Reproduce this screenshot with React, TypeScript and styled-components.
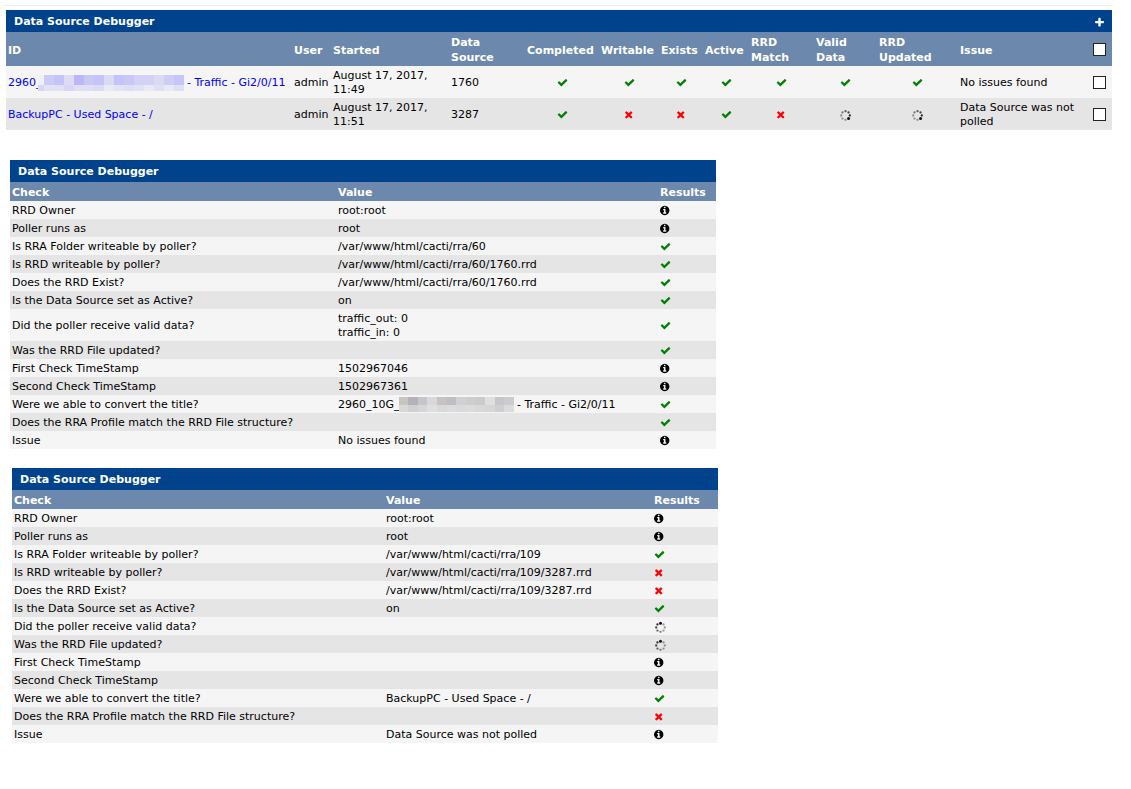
import React from "react";
import styled, { createGlobalStyle } from "styled-components";

const GlobalStyle = createGlobalStyle`
  body {
    margin: 0;
    background: #ffffff;
    color: #000000;
    font-family: Verdana, "DejaVu Sans", sans-serif;
    font-size: 11px;
    line-height: 14px;
  }
`;

const Page = styled.main`
  padding: 5px 18px 46px 4px;
`;

const Rule = styled.hr`
  height: 1px;
  margin: 0 0 4px;
  border: 0;
  background: #eeeeee;
`;

const Panel = styled.section<{ $indent: number; $space: number; $max?: number }>`
  max-width: ${(p) => (p.$max ? `${p.$max}px` : "none")};
  margin: 0 1px ${(p) => p.$space}px ${(p) => p.$indent}px;
`;

const TitleBar = styled.header`
  display: flex;
  align-items: center;
  justify-content: space-between;
  box-sizing: border-box;
  height: 22px;
  padding: 2px 7px 0 8px;
  background: #00438c;
  color: #ffffff;
`;

const Title = styled.h2`
  margin: 0;
  font-size: 11px;
  line-height: 14px;
`;

const AddButton = styled.button`
  display: flex;
  padding: 0;
  border: 0;
  background: none;
  color: #ffffff;
  cursor: pointer;
`;

const Table = styled.table`
  width: 100%;
  table-layout: fixed;
  border-collapse: collapse;
`;

const HeadRow = styled.tr`
  background: #6d88ad;
  color: #ffffff;
  line-height: 15px;
`;

const Row = styled.tr`
  background: #e5e5e5;

  &:nth-child(odd) {
    background: #f5f5f5;
  }
`;

const Col = styled.col<{ $w?: number }>`
  width: ${(p) => (p.$w ? `${p.$w}px` : "auto")};
`;

const HeadCell = styled.th`
  padding: 3px 2px 1px;
  text-align: left;
  font-weight: bold;
  white-space: pre-line;
`;

const Cell = styled.td<{ $center?: boolean }>`
  padding: 3px 2px 1px;
  text-align: ${(p) => (p.$center ? "center" : "left")};
  white-space: pre-line;
`;

const TickHeadCell = styled(HeadCell)`
  padding: 2px;
`;

const TickCell = styled(Cell)`
  padding: 2px;
`;

const TitleLink = styled.a`
  color: #0000ff;
  text-decoration: none;
  white-space: nowrap;
`;

const Tick = styled.input`
  appearance: none;
  display: block;
  box-sizing: border-box;
  width: 13px;
  height: 13px;
  margin: 0 0 0 4px;
  border: 1px solid #222222;
  background: #ffffff;
`;

const Glyph = styled.svg<{ $color: string }>`
  display: inline-block;
  width: 11px;
  height: 11px;
  vertical-align: -2px;
  fill: ${(p) => p.$color};
`;

const SpinnerGlyph = styled(Glyph)`
  width: 13px;
  height: 13px;
  margin-bottom: -1px;
  vertical-align: -3px;
`;

const Mosaic = styled.svg<{ $overlap: number; $drop: number }>`
  display: inline-block;
  margin: -4px 0 -4px -${(p) => p.$overlap}px;
  vertical-align: -${(p) => p.$drop}px;
`;

const paths = {
  check:
    "M1671 566q0 40-28 68l-724 724-136 136q-28 28-68 28t-68-28l-136-136-362-362q-28-28-28-68t28-68l136-136q28-28 68-28t68 28l294 295 656-657q28-28 68-28t68 28l136 136q28 28 28 68z",
  times:
    "M1490 1322q0 40-28 68l-136 136q-28 28-68 28t-68-28l-294-294-294 294q-28 28-68 28t-68-28l-136-136q-28-28-28-68t28-68l294-294-294-294q-28-28-28-68t28-68l136-136q28-28 68-28t68 28l294 294 294-294q28-28 68-28t68 28l136 136q28 28 28 68t-28 68l-294 294 294 294q28 28 28 68z",
  info:
    "M1152 1376v-160q0-14-9-23t-23-9h-96v-512q0-14-9-23t-23-9h-320q-14 0-23 9t-9 23v160q0 14 9 23t23 9h96v320h-96q-14 0-23 9t-9 23v160q0 14 9 23t23 9h448q14 0 23-9t9-23zm-128-896v-160q0-14-9-23t-23-9h-192q-14 0-23 9t-9 23v160q0 14 9 23t23 9h192q14 0 23-9t9-23zm640 416q0 209-103 385.5t-279.5 279.5-385.5 103-385.5-103-279.5-279.5-103-385.5 103-385.5 279.5-279.5 385.5-103 385.5 103 279.5 279.5 103 385.5z",
  plus:
    "M1600 736v192q0 40-28 68t-68 28h-416v416q0 40-28 68t-68 28h-192q-40 0-68-28t-28-68v-416h-416q-40 0-68-28t-28-68v-192q0-40 28-68t68-28h416v-416q0-40 28-68t68-28h192q40 0 68 28t28 68v416h416q40 0 68 28t28 68z",
};

type Status = "check" | "times" | "info" | "wait";

const names: Record<Status, string> = {
  check: "Passed",
  times: "Failed",
  info: "Information",
  wait: "Waiting",
};

/* The darkest dot of the spinner is at `lead`, counted clockwise from the top. */
function Spinner({ lead }: { lead: number }) {
  return (
    <SpinnerGlyph $color="#111111" viewBox="0 0 13 13" role="img" aria-label={names.wait}>
      {Array.from({ length: 8 }, (_, i) => {
        const angle = (i * Math.PI) / 4;
        const age = (lead - i + 8) % 8;
        return (
          <circle
            key={i}
            cx={6.5 + 4.3 * Math.sin(angle)}
            cy={6.5 - 4.3 * Math.cos(angle)}
            r={age === 0 ? 1.5 : 1.15}
            opacity={Math.max(0.4, 1 - age * 0.12)}
          />
        );
      })}
    </SpinnerGlyph>
  );
}

function StatusIcon({ status, lead = 0 }: { status: Status; lead?: number }) {
  if (status === "wait") return <Spinner lead={lead} />;
  const color = status === "check" ? "#008000" : status === "times" ? "#ff0000" : "#000000";
  return (
    <Glyph
      $color={color}
      viewBox={status === "check" ? "0 0 1792 1792" : "128 0 1792 1792"}
      role="img"
      aria-label={names[status]}
    >
      <path d={paths[status]} />
    </Glyph>
  );
}

/* Pixelated block that hides part of a device name; its first cell may be narrower than the rest. */
function Redacted({
  top,
  bottom,
  width,
  height,
  first,
  split,
  overlap,
  drop,
}: {
  top: string[];
  bottom: string[];
  width: number;
  height: number;
  first: number;
  split: number;
  overlap: number;
  drop: number;
}) {
  const step = (width - first) / (top.length - 1);
  const left = (i: number) => (i === 0 ? 0 : first + (i - 1) * step);
  return (
    <Mosaic
      $overlap={overlap}
      $drop={drop}
      width={width}
      height={height}
      shapeRendering="crispEdges"
      aria-hidden="true"
    >
      {top.map((fill, i) => (
        <rect key={`t${i}`} x={left(i)} y={0} width={step + 1} height={split} fill={fill} />
      ))}
      {bottom.map((fill, i) => (
        <rect key={`b${i}`} x={left(i)} y={split} width={step + 1} height={height - split} fill={fill} />
      ))}
    </Mosaic>
  );
}

const blueMosaic = (
  <Redacted
    width={146}
    height={16}
    first={6}
    split={10}
    overlap={4}
    drop={1}
    top={["#f0f0f6", "#cccbf5", "#c5c4f8", "#dedcf5", "#bab8f7", "#c8c7f6", "#c5c4f7", "#dad9f6", "#c4c3f7", "#c8c8f8", "#d3d2f6", "#d2d1f6", "#dad9f6", "#cecdf5", "#c6c5f8"]}
    bottom={["#d7d6f6", "#e3e2f5", "#e1e0f5", "#d7d6f6", "#e0dff5", "#dfdef6", "#dcdbf6", "#e9e8f6", "#e3e2f6", "#dedef6", "#e2e1f6", "#ebe8f6", "#dfdff6", "#eae9f6", "#dedef5"]}
  />
);

const greyMosaic = (
  <Redacted
    width={115}
    height={15}
    first={9}
    split={8}
    overlap={1}
    drop={0}
    top={["#c5c6c0", "#b4b2b7", "#c4c6cb", "#d8d8d9", "#c7c2c4", "#c1bec3", "#d0d1d2", "#cfcdcd", "#cfcaca", "#dce0e1", "#c6c7ca", "#cecbce"]}
    bottom={["#d8d8d8", "#d0d0d0", "#d6d6d6", "#dedede", "#d9d9d9", "#dcdcdc", "#dadada", "#dcdcdc", "#d8d8d8", "#d6d6d6", "#cfcfcf", "#dbdbdb"]}
  />
);

const summaryCols: { label: string; width?: number }[] = [
  { label: "ID" },
  { label: "User", width: 39 },
  { label: "Started", width: 118 },
  { label: "Data\nSource", width: 76 },
  { label: "Completed", width: 74 },
  { label: "Writable", width: 60 },
  { label: "Exists", width: 44 },
  { label: "Active", width: 46 },
  { label: "RRD\nMatch", width: 65 },
  { label: "Valid\nData", width: 63 },
  { label: "RRD\nUpdated", width: 81 },
  { label: "Issue", width: 129 },
];

const summaryRows: {
  title: React.ReactNode;
  started: string;
  source: string;
  statuses: Status[];
  issue: string;
}[] = [
  {
    title: <>2960_{blueMosaic} - Traffic - Gi2/0/11</>,
    started: "August 17, 2017,\n11:49",
    source: "1760",
    statuses: ["check", "check", "check", "check", "check", "check", "check"],
    issue: "No issues found",
  },
  {
    title: "BackupPC - Used Space - /",
    started: "August 17, 2017,\n11:51",
    source: "3287",
    statuses: ["check", "times", "times", "check", "times", "wait", "wait"],
    issue: "Data Source was not\npolled",
  },
];

const checks = [
  "RRD Owner",
  "Poller runs as",
  "Is RRA Folder writeable by poller?",
  "Is RRD writeable by poller?",
  "Does the RRD Exist?",
  "Is the Data Source set as Active?",
  "Did the poller receive valid data?",
  "Was the RRD File updated?",
  "First Check TimeStamp",
  "Second Check TimeStamp",
  "Were we able to convert the title?",
  "Does the RRA Profile match the RRD File structure?",
  "Issue",
];

type Result = [React.ReactNode, Status];

const trafficResults: Result[] = [
  ["root:root", "info"],
  ["root", "info"],
  ["/var/www/html/cacti/rra/60", "check"],
  ["/var/www/html/cacti/rra/60/1760.rrd", "check"],
  ["/var/www/html/cacti/rra/60/1760.rrd", "check"],
  ["on", "check"],
  ["traffic_out: 0\ntraffic_in: 0", "check"],
  ["", "check"],
  ["1502967046", "info"],
  ["1502967361", "info"],
  [<>2960_10G_{greyMosaic} - Traffic - Gi2/0/11</>, "check"],
  ["", "check"],
  ["No issues found", "info"],
];

const backupResults: Result[] = [
  ["root:root", "info"],
  ["root", "info"],
  ["/var/www/html/cacti/rra/109", "check"],
  ["/var/www/html/cacti/rra/109/3287.rrd", "times"],
  ["/var/www/html/cacti/rra/109/3287.rrd", "times"],
  ["on", "check"],
  ["", "wait"],
  ["", "wait"],
  ["", "info"],
  ["", "info"],
  ["BackupPC - Used Space - /", "check"],
  ["", "times"],
  ["Data Source was not polled", "info"],
];

function Details({ results, checkWidth, resultWidth }: { results: Result[]; checkWidth: number; resultWidth: number }) {
  return (
    <Table>
      <colgroup>
        <Col $w={checkWidth} />
        <Col />
        <Col $w={resultWidth} />
      </colgroup>
      <thead>
        <HeadRow>
          <HeadCell scope="col">Check</HeadCell>
          <HeadCell scope="col">Value</HeadCell>
          <HeadCell scope="col">Results</HeadCell>
        </HeadRow>
      </thead>
      <tbody>
        {results.map(([value, status], i) => (
          <Row key={checks[i]}>
            <Cell>{checks[i]}</Cell>
            <Cell>{value}</Cell>
            <Cell>
              <StatusIcon status={status} />
            </Cell>
          </Row>
        ))}
      </tbody>
    </Table>
  );
}

export default function App() {
  return (
    <>
      <GlobalStyle />
      <Page>
        <Rule />
        <Panel $indent={2} $space={30}>
          <TitleBar>
            <Title>Data Source Debugger</Title>
            <AddButton type="button" aria-label="Add">
              <Glyph $color="#ffffff" viewBox="0 0 1792 1792" aria-hidden="true">
                <path d={paths.plus} />
              </Glyph>
            </AddButton>
          </TitleBar>
          <Table>
            <colgroup>
              {summaryCols.map((c) => (
                <Col key={c.label} $w={c.width} />
              ))}
              <Col $w={25} />
            </colgroup>
            <thead>
              <HeadRow>
                {summaryCols.map((c) => (
                  <HeadCell key={c.label} scope="col">
                    {c.label}
                  </HeadCell>
                ))}
                <TickHeadCell scope="col">
                  <Tick type="checkbox" aria-label="Select all" />
                </TickHeadCell>
              </HeadRow>
            </thead>
            <tbody>
              {summaryRows.map((r) => (
                <Row key={r.source}>
                  <Cell>
                    <TitleLink href="#">{r.title}</TitleLink>
                  </Cell>
                  <Cell>admin</Cell>
                  <Cell>{r.started}</Cell>
                  <Cell>{r.source}</Cell>
                  {r.statuses.map((s, i) => (
                    <Cell key={i} $center>
                      <StatusIcon status={s} lead={3} />
                    </Cell>
                  ))}
                  <Cell>{r.issue}</Cell>
                  <TickCell>
                    <Tick type="checkbox" aria-label={`Select data source ${r.source}`} />
                  </TickCell>
                </Row>
              ))}
            </tbody>
          </Table>
        </Panel>
        <Panel $indent={6} $space={19} $max={706}>
          <TitleBar>
            <Title>Data Source Debugger</Title>
          </TitleBar>
          <Details results={trafficResults} checkWidth={326} resultWidth={58} />
        </Panel>
        <Panel $indent={8} $space={0} $max={706}>
          <TitleBar>
            <Title>Data Source Debugger</Title>
          </TitleBar>
          <Details results={backupResults} checkWidth={372} resultWidth={66} />
        </Panel>
      </Page>
    </>
  );
}
